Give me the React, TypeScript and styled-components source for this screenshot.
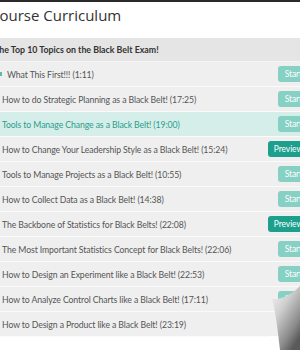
import React from "react";
import styled, { createGlobalStyle } from "styled-components";

const Global = createGlobalStyle`
  html, body { margin: 0; padding: 0; background: #fff; overflow: hidden; }
  body { font-family: "Lato", "Open Sans", sans-serif; }
`;

const Page = styled.div`
  margin-left: -10px;
  width: 330px;
  border-top: 2px solid #2a2a2a;
`;

const Title = styled.h1`
  margin: 0;
  height: 36px;
  padding-top: 3px;
  box-sizing: border-box;
  font-family: "Open Sans", sans-serif;
  font-weight: 400;
  font-size: 15px;
  color: #333;
  line-height: 20px;
`;

const Section = styled.div`
  box-shadow: 0 2px 2px rgba(0, 0, 0, 0.6);
`;

const SectionHeader = styled.div`
  height: 23px;
  background: #e5e5e5;
  border-bottom: 1px solid #f4f4f4;
  display: flex;
  align-items: center;
  padding-left: 4px;
  font-size: 8.8px;
  font-weight: 700;
  color: #333;
  white-space: nowrap;
`;

const Row = styled.div<{ $active?: boolean }>`
  height: 24px;
  border-bottom: 1px solid #fafafa;
  background: ${(p) => (p.$active ? "#d6eee9" : "#efefef")};
  color: ${(p) => (p.$active ? "#2a9d8c" : "#555")};
  display: grid;
  grid-template-columns: minmax(0, 1fr) auto;
  align-items: center;
  padding: 0 11px 0 12px;
  font-size: 8.7px;
  letter-spacing: -0.1px;
`;

const Label = styled.span`
  display: flex;
  align-items: center;
  white-space: nowrap;
`;

const Lead = styled.span`
  width: 2px;
  height: 4px;
  background: #5fb8b0;
  margin: 0 5px 0 -2px;
`;

const Button = styled.span<{ $preview?: boolean }>`
  height: 16px;
  border-radius: 3px;
  padding: 0 ${(p) => (p.$preview ? "6px" : "7px")};
  display: flex;
  align-items: center;
  font-size: 8.5px;
  color: #fff;
  background: ${(p) => (p.$preview ? "#1c9f8d" : "#86d0c4")};
`;

const Curl = styled.svg`
  position: absolute;
  right: 0;
  bottom: 0;
`;

const rows: { t: string; preview?: boolean; active?: boolean; lead?: boolean }[] = [
  { t: "What This First!!! (1:11)", lead: true },
  { t: "How to do Strategic Planning as a Black Belt! (17:25)" },
  { t: "Tools to Manage Change as a Black Belt! (19:00)", active: true },
  { t: "How to Change Your Leadership Style as a Black Belt! (15:24)", preview: true },
  { t: "Tools to Manage Projects as a Black Belt! (10:55)" },
  { t: "How to Collect Data as a Black Belt! (14:38)" },
  { t: "The Backbone of Statistics for Black Belts! (22:08)", preview: true },
  { t: "The Most Important Statistics Concept for Black Belts! (22:06)" },
  { t: "How to Design an Experiment like a Black Belt! (22:53)" },
  { t: "How to Analyze Control Charts like a Black Belt! (17:11)" },
  { t: "How to Design a Product like a Black Belt! (23:19)" },
];

export default function App() {
  return (
    <>
      <Global />
      <Page>
        <Title>Course Curriculum</Title>
        <Section>
          <SectionHeader>The Top 10 Topics on the Black Belt Exam!</SectionHeader>
          {rows.map((r) => (
            <Row key={r.t} $active={r.active}>
              <Label>
                {r.lead && <Lead />}
                {r.t}
              </Label>
              <Button $preview={r.preview}>{r.preview ? "Preview" : "Start"}</Button>
            </Row>
          ))}
        </Section>
      </Page>
      <Curl width="30" height="66" viewBox="0 0 30 66">
        <defs>
          <linearGradient id="fold" x1="0" y1="0" x2="0.7" y2="1">
            <stop offset="0" stopColor="#f6f6f6" />
            <stop offset="0.4" stopColor="#cfcfcf" />
            <stop offset="0.8" stopColor="#8a8a8a" />
            <stop offset="1" stopColor="#5a5a5a" />
          </linearGradient>
        </defs>
        <path d="M0 52 L30 52 L30 66 L0 66 Z" fill="#fff" />
        <path d="M2 15 C12 16 22 10 30 2 L30 66 L10 66 C8 48 6 30 2 15 Z" fill="url(#fold)" />
      </Curl>
    </>
  );
}
